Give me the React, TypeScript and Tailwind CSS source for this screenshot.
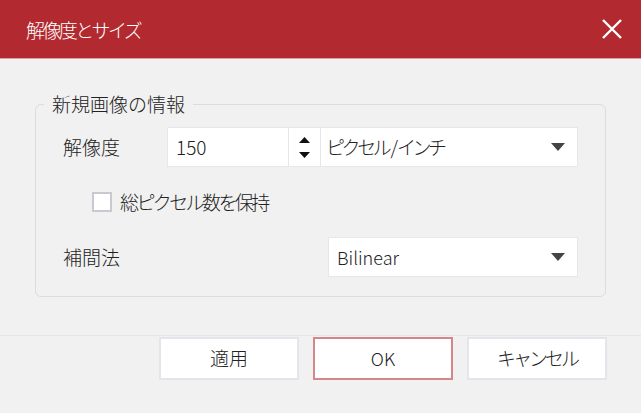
import React, { useState } from 'react';

const Caret: React.FC = () => (
  <svg width="14" height="8" viewBox="0 0 14 8" className="text-[#444]">
    <path d="M0 0 H14 L7 8 Z" fill="currentColor" />
  </svg>
);

export default function App() {
  const [keep, setKeep] = useState(false);

  return (
    <div className="w-[641px] h-[413px] bg-[#f1f1f1] flex flex-col overflow-hidden font-light font-['Noto_Sans_CJK_JP','Noto_Sans',sans-serif]">
      {/* Header */}
      <div className="h-[59px] bg-[#b22a2f] flex items-center justify-between pl-[26px] pr-[19px] border-b border-[#d9a3a5]">
        <span className="text-white text-[19px] leading-none tracking-[-2.6px]">解像度とサイズ</span>
        <svg width="20" height="20" viewBox="0 0 20 20">
          <path d="M1 1 L19 19 M19 1 L1 19" stroke="white" strokeWidth="2.4" />
        </svg>
      </div>

      {/* Body */}
      <div className="px-[35px] pt-[32px]">
        <fieldset className="border border-[#dcdce3] rounded-[6px] px-[8px] pb-[19px]">
          <legend className="px-[8px] text-[19px] leading-[26px] text-[#222]">新規画像の情報</legend>
          <div className="pl-[19px] pr-[19px] pt-[10px] flex flex-col gap-[25px] text-[#222] text-[19px]">
            {/* Resolution */}
            <div className="flex items-center h-[40px]">
              <span className="w-[104px]">解像度</span>
              <div className="flex h-[40px]">
                <div className="w-[121px] bg-white border border-[#e6e6eb] border-r-0 flex items-center pl-[8px]">150</div>
                <div className="w-[33px] bg-white border border-[#e6e6eb] flex flex-col items-center justify-center gap-[9px]">
                  <svg width="11" height="6" viewBox="0 0 11 6"><path d="M0 6 L5.5 0 L11 6 Z" fill="#111" /></svg>
                  <svg width="11" height="6" viewBox="0 0 11 6"><path d="M0 0 H11 L5.5 6 Z" fill="#111" /></svg>
                </div>
                <div className="w-[257px] bg-white border border-[#e6e6eb] border-l-0 flex items-center justify-between pl-[5px] pr-[12px]">
                  <span>
                    <span className="tracking-[-3.4px]">ピクセル</span>
                    <span className="pl-[2px] tracking-[-1px]">/</span>
                    <span className="tracking-[-3.4px]">インチ</span>
                  </span>
                  <Caret />
                </div>
              </div>
            </div>

            {/* Keep pixel count */}
            <label className="flex items-center h-[20px] pl-[29px] gap-[8px] cursor-pointer">
              <input
                type="checkbox"
                checked={keep}
                onChange={(e) => setKeep(e.target.checked)}
                className="appearance-none w-[20px] h-[20px] bg-white border-2 border-[#c9c9d0] checked:bg-[#b22a2f]"
              />
              <span className="tracking-[-2.6px]">総ピクセル数を保持</span>
            </label>

            {/* Interpolation */}
            <div className="flex items-center h-[40px]">
              <span className="w-[265px]">補間法</span>
              <div className="w-[250px] h-[40px] bg-white border border-[#e6e6eb] flex items-center justify-between pl-[8px] pr-[12px]">
                <span className="text-[18px]">Bilinear</span>
                <Caret />
              </div>
            </div>
          </div>
        </fieldset>
      </div>

      {/* Footer */}
      <div className="mt-[38px] border-t border-[#e6e6e8] flex justify-end gap-[14px] pr-[34px] pt-[1px]">
        <button className="w-[140px] h-[43px] bg-white border-2 border-[#e4e4ea] text-[19px] text-[#222]">適用</button>
        <button className="w-[140px] h-[43px] bg-white border-2 border-[#d6868a] text-[18px] text-[#222]">OK</button>
        <button className="w-[140px] h-[43px] bg-white border-2 border-[#e4e4ea] text-[19px] text-[#222] tracking-[-3px]">キャンセル</button>
      </div>
    </div>
  );
}
